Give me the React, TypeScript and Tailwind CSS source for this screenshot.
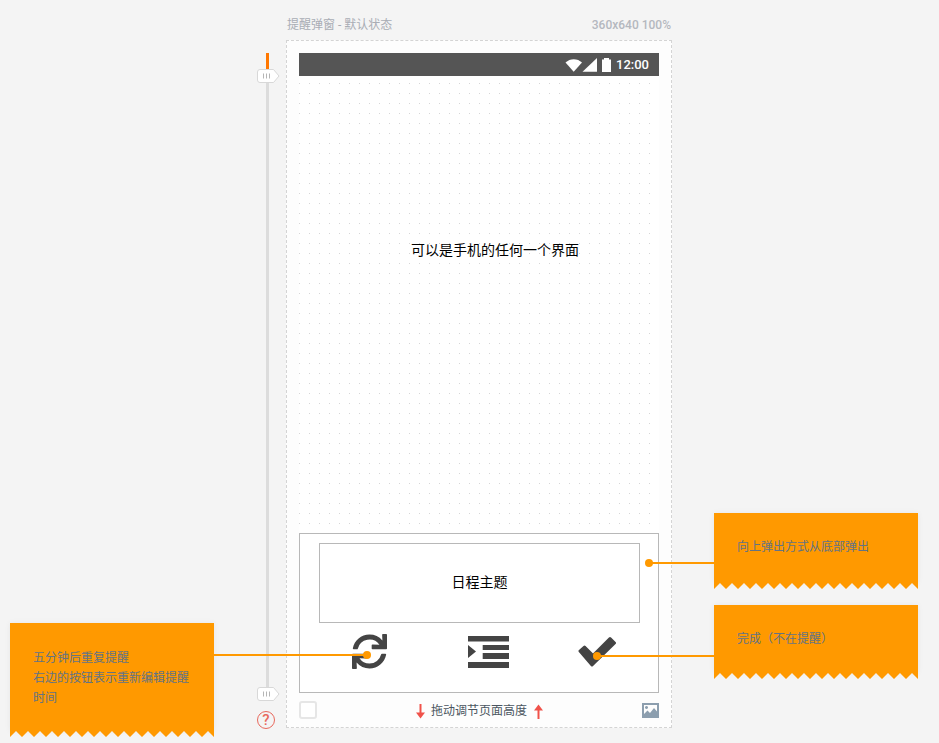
import React from 'react';
import { FaSync } from 'react-icons/fa';

const cjk = "font-['Roboto','Noto_Sans_CJK_SC',sans-serif]";

function Handle({ className }: { className: string }) {
  return (
    <svg className={`absolute left-[-9px] ${className}`} width="24" height="14" viewBox="0 0 24 14">
      <path d="M3 .5h13.500L22 7l-5.500 6.500H3A2.500 2.500 0 0 1 .5 11V3A2.500 2.500 0 0 1 3 .5z" fill="#fff" stroke="#d8d8d8" />
      <path d="M6.500 4.500v5M9.500 4.500v5M12.500 4.500v5" stroke="#b5b5b5" strokeWidth="1" />
    </svg>
  );
}

function Note({ className, bodyClass, lines }: { className: string; bodyClass: string; lines: string[] }) {
  return (
    <div className={`flex w-[204px] flex-col ${className}`}>
      <div className={`flex-1 bg-[#ff9900] pl-[23px] pr-5 text-xs leading-5 text-[#637384] shadow-[0_0_6px_rgba(0,0,0,0.06)] ${bodyClass}`}>
        {lines.map((line) => (
          <p key={line}>{line}</p>
        ))}
      </div>
      <svg className="block" width="204" height="6" viewBox="0 0 204 6">
        <path
          d={`M0 0H204V6${Array.from({ length: 17 }, (_, i) => `L${204 - i * 12 - 6} 0L${204 - i * 12 - 12} 6`).join('')}Z`}
          fill="#ff9900"
        />
      </svg>
    </div>
  );
}

function Connector({ className }: { className: string }) {
  return <div className={`absolute h-[2px] bg-[#ff9900] ${className}`} />;
}

function Dot({ className }: { className: string }) {
  return <div className={`absolute h-2 w-2 rounded-full bg-[#ff9900] ${className}`} />;
}

export default function App() {
  return (
    <div className={`relative flex h-[743px] w-full overflow-hidden bg-[#f4f4f4] ${cjk}`}>
      {/* left note */}
      <div className="w-[257px] shrink-0 pl-[10px] pt-[623px]">
        <Note className="h-[114px]" bodyClass="pt-[25px]" lines={['五分钟后重复提醒', '右边的按钮表示重新编辑提醒', '时间']} />
      </div>

      {/* ruler */}
      <div className="flex w-[29px] shrink-0 flex-col pt-[53px]">
        <div className="relative ml-[9px] h-[641px] w-[3px] bg-[#dcdcdc]">
          <div className="h-[17px] bg-[#ff7700]" />
          <Handle className="top-[16px]" />
          <Handle className="top-[634px]" />
        </div>
        <div className="mt-[17px] flex h-[18px] w-[18px] items-center justify-center rounded-full border border-[#e8685c] text-[15px] font-medium leading-none text-[#e8685c]">
          ?
        </div>
      </div>

      {/* page frame */}
      <div className="flex w-[386px] shrink-0 flex-col">
        <div className="flex h-10 items-center justify-between px-px pt-[10px] text-xs font-medium text-[#b4b8bf]">
          <span className="font-normal text-[#a9adb5]">提醒弹窗 - 默认状态</span>
          <span>360x640 100%</span>
        </div>

        <div className="h-[688px] border border-dashed border-[#d4d4d4] bg-[#fdfdfd] px-3 pt-3">
          <div className="flex h-[640px] w-[360px] flex-col bg-white bg-[radial-gradient(circle_at_0.5px_0.5px,#d6d6d6_0.6px,transparent_1px)] bg-[size:10px_10px]">
            <div className="flex h-[23px] items-center justify-end bg-[#555555] pr-[10px] text-[13px] font-medium text-white">
              <svg width="46" height="15" viewBox="0 0 46 15" className="mr-[5px]">
                <path d="M.5 5.500C5 1 12.500 1 17 5.500L8.700 14.700z" fill="#fff" />
                <path d="M17.500 14.700L32 1v13.700z" fill="#fff" />
                <path d="M37 2.500h2V1h5v1.500h2V15h-9z" fill="#fff" />
              </svg>
              <span>12:00</span>
            </div>

            <div className="flex-1 pl-[112px] pt-[164px] text-sm leading-5 text-black">可以是手机的任何一个界面</div>

            <div className="h-40 border border-[#b8b8b8] bg-white pl-[19px] pt-[9px]">
              <div className="flex h-20 w-[321px] items-center justify-center border border-[#b8b8b8] pb-[3px] text-sm text-black">
                日程主题
              </div>
              <div className="mt-[11px] flex items-center">
                <FaSync className="ml-[33px] text-[#444444]" size={35} />
                <svg className="ml-[81px]" width="42" height="32" viewBox="0 0 42 32" fill="#444444">
                  <path d="M0 0h41v5.500H0zM14.700 9H41v5H14.700zM14.700 17H41v6H14.700zM0 26h41v6H0zM0 9l8 6.500L0 22z" />
                </svg>
                <svg className="ml-[68px]" width="40" height="32" viewBox="0 0 40 32">
                  <path
                    d="M2 15L6.500 11L15 19.500L32 2.500L36.500 7L14 29z"
                    fill="#444444"
                    stroke="#444444"
                    strokeWidth="3"
                    strokeLinejoin="round"
                  />
                </svg>
              </div>
            </div>
          </div>

          <div className="flex h-[34px] items-center justify-between">
            <div className="h-[18px] w-[18px] rounded-[3px] border-2 border-[#e6e6e6] bg-white" />
            <div className="flex items-center gap-[5px] pt-[2px] text-xs text-[#4a5560]">
              <svg width="11" height="15" viewBox="0 0 11 15">
                <path d="M5.500 0v10" stroke="#f0524a" strokeWidth="2" />
                <path d="M1 8.500h9L5.500 14.500z" fill="#f0524a" />
              </svg>
              <span>拖动调节页面高度</span>
              <svg width="11" height="15" viewBox="0 0 11 15" className="ml-[1px]">
                <path d="M5.500 15V5" stroke="#f0524a" strokeWidth="2" />
                <path d="M1 6.500h9L5.500 .500z" fill="#f0524a" />
              </svg>
            </div>
            <svg width="17" height="15" viewBox="0 0 17 15">
              <path fillRule="evenodd" d="M0 0h17v15H0zM2 2v9l3.500-3.500 2.500 2.500 4-5 3 3.500V2zM4.500 3a1.500 1.500 0 1 0 .01 0z" fill="#8c9eae" />
            </svg>
          </div>
        </div>
      </div>

      {/* right notes */}
      <div className="flex flex-col gap-4 pl-[42px] pt-[513px]">
        <Note className="h-[76px]" bodyClass="pt-6" lines={['向上弹出方式从底部弹出']} />
        <Note className="h-[74px]" bodyClass="pt-6" lines={['完成（不在提醒）']} />
      </div>

      {/* connectors lie over the page */}
      <Connector className="left-[214px] top-[654px] w-[153px]" />
      <Dot className="left-[363px] top-[651px]" />
      <Connector className="left-[597px] top-[655px] w-[117px]" />
      <Dot className="left-[593px] top-[652px]" />
      <Connector className="left-[649px] top-[562px] w-[65px]" />
      <Dot className="left-[645px] top-[559px]" />
    </div>
  );
}
